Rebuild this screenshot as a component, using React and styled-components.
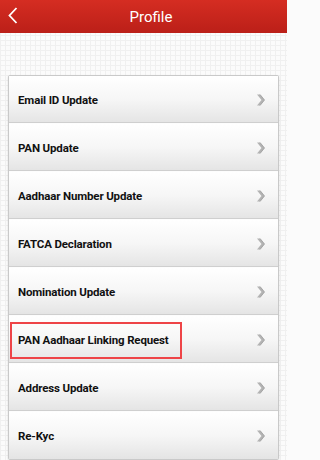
import React from "react";
import styled, { createGlobalStyle } from "styled-components";

const GlobalStyle = createGlobalStyle`
  html, body {
    margin: 0;
    padding: 0;
    background: #fbfbfb;
    font-family: Roboto, "Liberation Sans", Arial, sans-serif;
  }
`;

const Page = styled.div`
  width: 287px;
  height: 460px;
  overflow: hidden;
  background-color: #fbfbfb;
  background-image:
    linear-gradient(to right, #f0f0f0 1px, transparent 1px),
    linear-gradient(to bottom, #f0f0f0 1px, transparent 1px);
  background-size: 5px 5px;
  display: flex;
  flex-direction: column;
`;

const Header = styled.div`
  height: 33px;
  padding-left: 15px;
  background: linear-gradient(to bottom, #d52d22, #bb1f18);
  display: flex;
  align-items: center;
  justify-content: center;
  position: relative;
  color: #fff;
  font-size: 15px;
`;

const BackButton = styled.div`
  position: absolute;
  left: 8px;
  top: 7px;
  width: 10px;
  height: 17px;
  display: flex;
`;

const List = styled.div`
  margin: 42px 8px 0 8px;
  border: 1px solid #c9c9c9;
  border-radius: 2px;
  box-shadow: 0 1px 2px rgba(0, 0, 0, 0.15);
  display: flex;
  flex-direction: column;
`;

const Row = styled.div`
  height: 47px;
  display: flex;
  align-items: center;
  justify-content: space-between;
  padding: 0 13px 0 9px;
  background: linear-gradient(to bottom, #ffffff 0%, #f6f6f6 50%, #e4e4e4 100%);
  border-top: ${props => (props.first ? "none" : "1px solid #fdfdfd")};
  box-shadow: ${props => (props.first ? "none" : "0 -1px 0 #cfcfcf")};
`;

const Label = styled.span`
  font-size: 11.5px;
  font-weight: bold;
  letter-spacing: -0.15px;
  color: #111;
  padding: 8px 0;
  position: relative;
`;

const Highlight = styled.span`
  position: absolute;
  left: -8px;
  right: -13px;
  top: -3px;
  bottom: -4px;
  border: 2px solid #ee4447;
`;

const Chevron = () => (
  <svg width="9" height="12" viewBox="0 0 9 12">
    <path d="M1 0.5 L4 0.5 L8.5 6 L4 11.5 L1 11.5 L5.5 6 Z" fill="#b3b3b3" />
    <path d="M4 0.5 L8.5 6 L4 11.5" fill="none" stroke="#9a9a9a" strokeWidth="0.8" />
  </svg>
);

const items = [
  "Email ID Update",
  "PAN Update",
  "Aadhaar Number Update",
  "FATCA Declaration",
  "Nomination Update",
  "PAN Aadhaar Linking Request",
  "Address Update",
  "Re-Kyc",
];

const App = () => (
  <>
    <GlobalStyle />
    <Page>
      <Header>
        <BackButton>
          <svg width="10" height="17" viewBox="0 0 10 17">
            <path d="M8.5 1 L1.5 8.5 L8.5 16" fill="none" stroke="#fff" strokeWidth="1.8" />
          </svg>
        </BackButton>
        Profile
      </Header>
      <List>
        {items.map((item, i) => (
          <Row key={item} first={i === 0}>
            <Label>
              {item}
              {item === "PAN Aadhaar Linking Request" && <Highlight />}
            </Label>
            <Chevron />
          </Row>
        ))}
      </List>
    </Page>
  </>
);

export default App;
